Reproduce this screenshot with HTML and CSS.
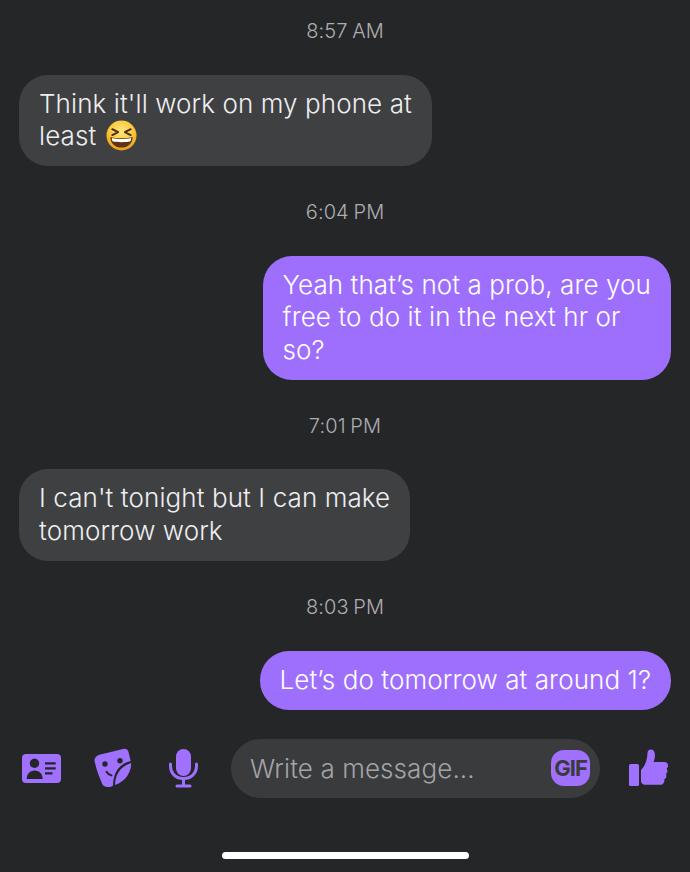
FILE: index.html
```html
<!DOCTYPE html>
<html lang="en">
<head>
  <meta charset="UTF-8" />
  <meta name="viewport" content="width=device-width, initial-scale=1.0" />
  <title>Messages</title>
  <link rel="stylesheet" href="styles.css">
</head>
<body>
<div class="chat">
  <div class="thread">
    <div class="time">8:57 AM</div>
    <div class="bubble in">Think it'll work on my phone at<br>least
      <svg class="emoji" viewBox="0 0 32 32" aria-hidden="true">
        <defs>
          <radialGradient id="face" cx="50%" cy="35%" r="65%">
            <stop offset="0" stop-color="#ffe682"/>
            <stop offset="0.6" stop-color="#fbc93a"/>
            <stop offset="1" stop-color="#ee9a16"/>
          </radialGradient>
        </defs>
        <circle cx="16" cy="16" r="15.5" fill="url(#face)"/>
        <path d="M6.5 9.5 12.5 12.5 6.5 15.5M25.5 9.5 19.5 12.5 25.5 15.5" fill="none" stroke="#4a2c12" stroke-width="2" stroke-linecap="round" stroke-linejoin="round"/>
        <path d="M4.5 17.5C9 19.3 23 19.3 27.5 17.5 27.5 24.5 22.5 28.5 16 28.5S4.5 24.5 4.5 17.5Z" fill="#5d3512"/>
        <path d="M6 18.6C11 20 21 20 26 18.6 26 20 25.7 21 25.3 22 20 23.2 12 23.2 6.7 22 6.3 21 6 20 6 18.6Z" fill="#fff"/>
      </svg>
    </div>
    <div class="time">6:04 PM</div>
    <div class="bubble out">Yeah that’s not a prob, are you<br>free to do it in the next hr or<br>so?</div>
    <div class="time">7:01 PM</div>
    <div class="bubble in">I can't tonight but I can make<br>tomorrow work</div>
    <div class="time">8:03 PM</div>
    <div class="bubble out">Let’s do tomorrow at around 1?</div>
  </div>

  <div class="composer">
    <svg class="icon card" viewBox="0 0 39 29" aria-hidden="true">
      <path fill-rule="evenodd" d="M4 0H35A4 4 0 0 1 39 4V25A4 4 0 0 1 35 29H4A4 4 0 0 1 0 25V4A4 4 0 0 1 4 0Z
        M12.500 4.600A4.700 4.700 0 1 0 12.501 4.600Z
        M4.700 25C4.700 20 8 16.500 12.700 16.500S20.700 20 20.700 25Z
        M23 8.300H33.700V10.500H23Z M23 13.300H33.700V15.500H23Z M23 18.300H30.500V20.500H23Z" fill="#a070ff"/>
    </svg>
    <svg class="icon sticker" viewBox="0 0 38 40" aria-hidden="true">
      <path d="M6.500 6.500 29 .9C32 .3 33.700 1.500 34.500 4L36.700 13C30 14.500 24.500 18.500 21.500 25 20 29 19 33 19 37.500 16.500 39.700 11 39.700 8.500 36.500 5.500 30 2.500 22 .8 14 -.2 10 2.500 7.500 6.500 6.500Z" fill="#a070ff"/>
      <path d="M37.200 15C37.500 22 33 33 21 37 21 29 24.500 19 37.200 15Z" fill="#a070ff"/>
      <circle cx="11" cy="16" r="2.700" fill="#252628"/>
      <circle cx="26" cy="12.700" r="2.700" fill="#252628"/>
      <path d="M12.500 23.800C13.500 25.600 15 26.800 17.500 27.400" fill="none" stroke="#252628" stroke-width="2" stroke-linecap="round"/>
    </svg>
    <svg class="icon mic" viewBox="0 0 29 39" aria-hidden="true">
      <rect x="7" y="0" width="15" height="27" rx="7.500" fill="#a070ff"/>
      <path d="M1.500 15V17C1.500 24.500 7 29.500 14.500 29.500S27.500 24.500 27.500 17V15" fill="none" stroke="#a070ff" stroke-width="3" stroke-linecap="round"/>
      <path d="M14.500 29.500V36M8 37H21" fill="none" stroke="#a070ff" stroke-width="3" stroke-linecap="round"/>
    </svg>
    <div class="input">
      <span class="placeholder">Write a message...</span>
      <span class="gif">GIF</span>
    </div>
    <svg class="icon like" viewBox="0 0 39 38" aria-hidden="true">
      <rect x="0" y="15" width="10" height="22" rx="1.500" fill="#a070ff"/>
      <path d="M12 21C15 18 17 14 18 9L18.500 4C18.500 1.500 20 .5 22 .5 24.500 .5 26 3 26 6 26 8.500 25.500 10.500 24.500 13H35.500C37.500 13 39 14.500 39 16.500 39 18 38.500 19 37.500 19.700 38.700 20.700 38.900 23.700 37 25 37.800 26.500 37.500 29.500 35.300 30.300 35.700 32.500 34.500 35.700 31.500 35.700H16C13.500 35.700 12 34 12 32Z" fill="#a070ff"/>
    </svg>
  </div>

  <div class="home-bar"></div>
</div>
</body>
</html>
```

FILE: styles.css
```css
* {
  box-sizing: border-box;
}
body {
  margin: 0;
  background: #252628;
  font-family: Inter, "Noto Sans", sans-serif;
  color: #eeeef0;
}
.chat {
  width: 690px;
  height: 872px;
  padding-top: 20px;
  display: flex;
  flex-direction: column;
  overflow: hidden;
}
.thread {
  display: flex;
  flex-direction: column;
  padding: 0 19px;
}
.time {
  height: 20px;
  line-height: 22px;
  margin-bottom: 34.8px;
  text-align: center;
  font-size: 20px;
  font-weight: 350;
  letter-spacing: 0.1px;
  word-spacing: -1px;
  color: #aeaeb2;
}
.bubble {
  width: fit-content;
  padding: 13px 20px 14px;
  border-radius: 29px;
  font-size: 26px;
  font-weight: 350;
  letter-spacing: 0.09px;
  line-height: 32.3px;
  white-space: nowrap;
  margin-bottom: 34.8px;
}
.bubble.in {
  background: #3f4042;
  align-self: flex-start;
}
.bubble.out {
  background: #9e6ffd;
  color: #fff;
  align-self: flex-end;
}
.bubble:last-child {
  margin-bottom: 0;
}
.emoji {
  width: 31px;
  height: 31px;
  vertical-align: -6px;
  margin-left: 2px;
}
.composer {
  margin-top: 29px;
  height: 59px;
  padding: 0 22px;
  display: flex;
  align-items: center;
}
.icon {
  flex: none;
}
.card {
  width: 39px;
  height: 29px;
}
.sticker {
  width: 38px;
  height: 40px;
  margin-left: 33px;
}
.mic {
  width: 29px;
  height: 39px;
  margin-left: 37px;
}
.input {
  flex: none;
  width: 369px;
  height: 59px;
  margin-left: 33px;
  padding: 0 10px 0 19px;
  border-radius: 30px;
  background: #3a3b3d;
  display: flex;
  align-items: center;
  justify-content: space-between;
}
.placeholder {
  font-size: 26px;
  font-weight: 350;
  letter-spacing: 0.09px;
  color: #a3a4a7;
}
.gif {
  width: 39px;
  height: 36px;
  border-radius: 13px;
  background: #a070ff;
  color: #3a3b3d;
  font-size: 22px;
  font-weight: 650;
  letter-spacing: -1px;
  line-height: 36px;
  text-align: center;
}
.like {
  width: 39px;
  height: 38px;
  margin-left: 29px;
}
.home-bar {
  width: 247px;
  height: 7px;
  margin: 54px auto 0;
  border-radius: 4px;
  background: #fff;
}
```
